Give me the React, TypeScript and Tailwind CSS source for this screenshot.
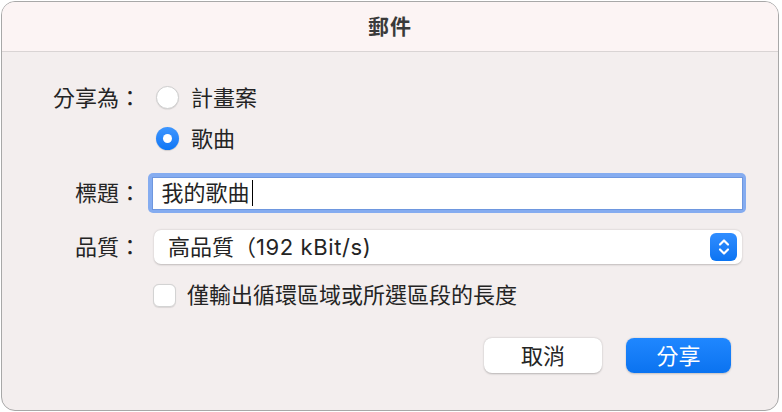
import React from "react";

const font = { fontFamily: '"Inter", "Noto Sans CJK TC", sans-serif' };

function Radio({ checked }: { checked?: boolean }) {
  if (checked) {
    return (
      <div className="w-[23px] h-[23px] rounded-full bg-gradient-to-b from-[#3d96ff] to-[#0a76f5] flex items-center justify-center shadow-[0_0.5px_1px_rgba(0,0,0,0.25)]">
        <div className="w-[9px] h-[9px] rounded-full bg-white" />
      </div>
    );
  }
  return (
    <div className="w-[23px] h-[23px] rounded-full bg-white border border-[#cfcfcf] shadow-[0_0.5px_1px_rgba(0,0,0,0.12)]" />
  );
}

export default function App() {
  return (
    <div className="w-[782px] h-[412px] bg-white p-px" style={font}>
      <div className="w-[778px] h-[410px] rounded-[14px] border border-[#a8a8a8] overflow-hidden flex flex-col bg-[#f3eeee] text-[#242424]">
        <div className="h-[50px] shrink-0 bg-[#fcf4f4] border-b border-[#d9d4d4] flex items-center justify-center">
          <span className="text-[21px] font-bold text-[#3a3a3a] tracking-[1px]">郵件</span>
        </div>
        <div className="flex-1 flex flex-col pt-[25px] text-[22px] leading-none">
          {/* share as row 1 */}
          <div className="h-[41px] flex items-center">
            <div className="w-[139px] text-right">分享為：</div>
            <div className="ml-[15px] flex items-center">
              <Radio />
              <span className="ml-[12px]">計畫案</span>
            </div>
          </div>
          <div className="h-[41px] flex items-center">
            <div className="w-[139px]" />
            <div className="ml-[15px] flex items-center">
              <Radio checked />
              <span className="ml-[12px]">歌曲</span>
            </div>
          </div>
          {/* title */}
          <div className="mt-[14px] h-[40px] flex items-center">
            <div className="w-[139px] text-right">標題：</div>
            <div className="ml-[7px] w-[598px] h-[40px] rounded-[5px] bg-[#85acf0] p-[3.5px]">
              <div className="w-full h-full bg-white border border-[#6e97df] flex items-center pl-[9px]">
                <span>我的歌曲</span>
                <span className="ml-[2px] w-px h-[26px] bg-black" />
              </div>
            </div>
          </div>
          {/* quality */}
          <div className="mt-[17px] h-[34px] flex items-center">
            <div className="w-[139px] text-right">品質：</div>
            <div className="ml-[13px] w-[588px] h-[34px] rounded-[7px] bg-white shadow-[0_0.5px_2px_rgba(0,0,0,0.22)] flex items-center justify-between pl-[14px] pr-[5px]">
              <span>
                高品質（<span className="tracking-[0.6px]">192 kBit/s)</span>
              </span>
              <div className="w-[27px] h-[28px] rounded-[6px] bg-gradient-to-b from-[#2f8dff] to-[#0a74f2] flex items-center justify-center">
                <svg width="14" height="20" viewBox="0 0 14 20" fill="none" stroke="white" strokeWidth="2.2" strokeLinecap="round" strokeLinejoin="round">
                  <path d="M3 7.5 L7 3.5 L11 7.5" />
                  <path d="M3 12.5 L7 16.5 L11 12.5" />
                </svg>
              </div>
            </div>
          </div>
          {/* checkbox */}
          <div className="mt-[19px] h-[24px] flex items-center">
            <div className="w-[139px]" />
            <div className="ml-[12px] flex items-center">
              <div className="w-[23px] h-[23px] rounded-[6px] bg-white border border-[#d3d3d3] shadow-[0_0.5px_1px_rgba(0,0,0,0.1)]" />
              <span className="ml-[11px]">僅輸出循環區域或所選區段的長度</span>
            </div>
          </div>
          {/* buttons */}
          <div className="mt-[31px] flex justify-end pr-[47px] gap-[24px]">
            <button className="w-[118px] h-[35px] rounded-[8px] bg-white shadow-[0_0.5px_2px_rgba(0,0,0,0.25)] flex items-center justify-center text-[#242424]">
              取消
            </button>
            <button className="w-[105px] h-[35px] rounded-[8px] bg-gradient-to-b from-[#1f87ff] to-[#0a73f0] shadow-[0_0.5px_2px_rgba(0,0,0,0.2)] flex items-center justify-center text-white">
              分享
            </button>
          </div>
        </div>
      </div>
    </div>
  );
}
